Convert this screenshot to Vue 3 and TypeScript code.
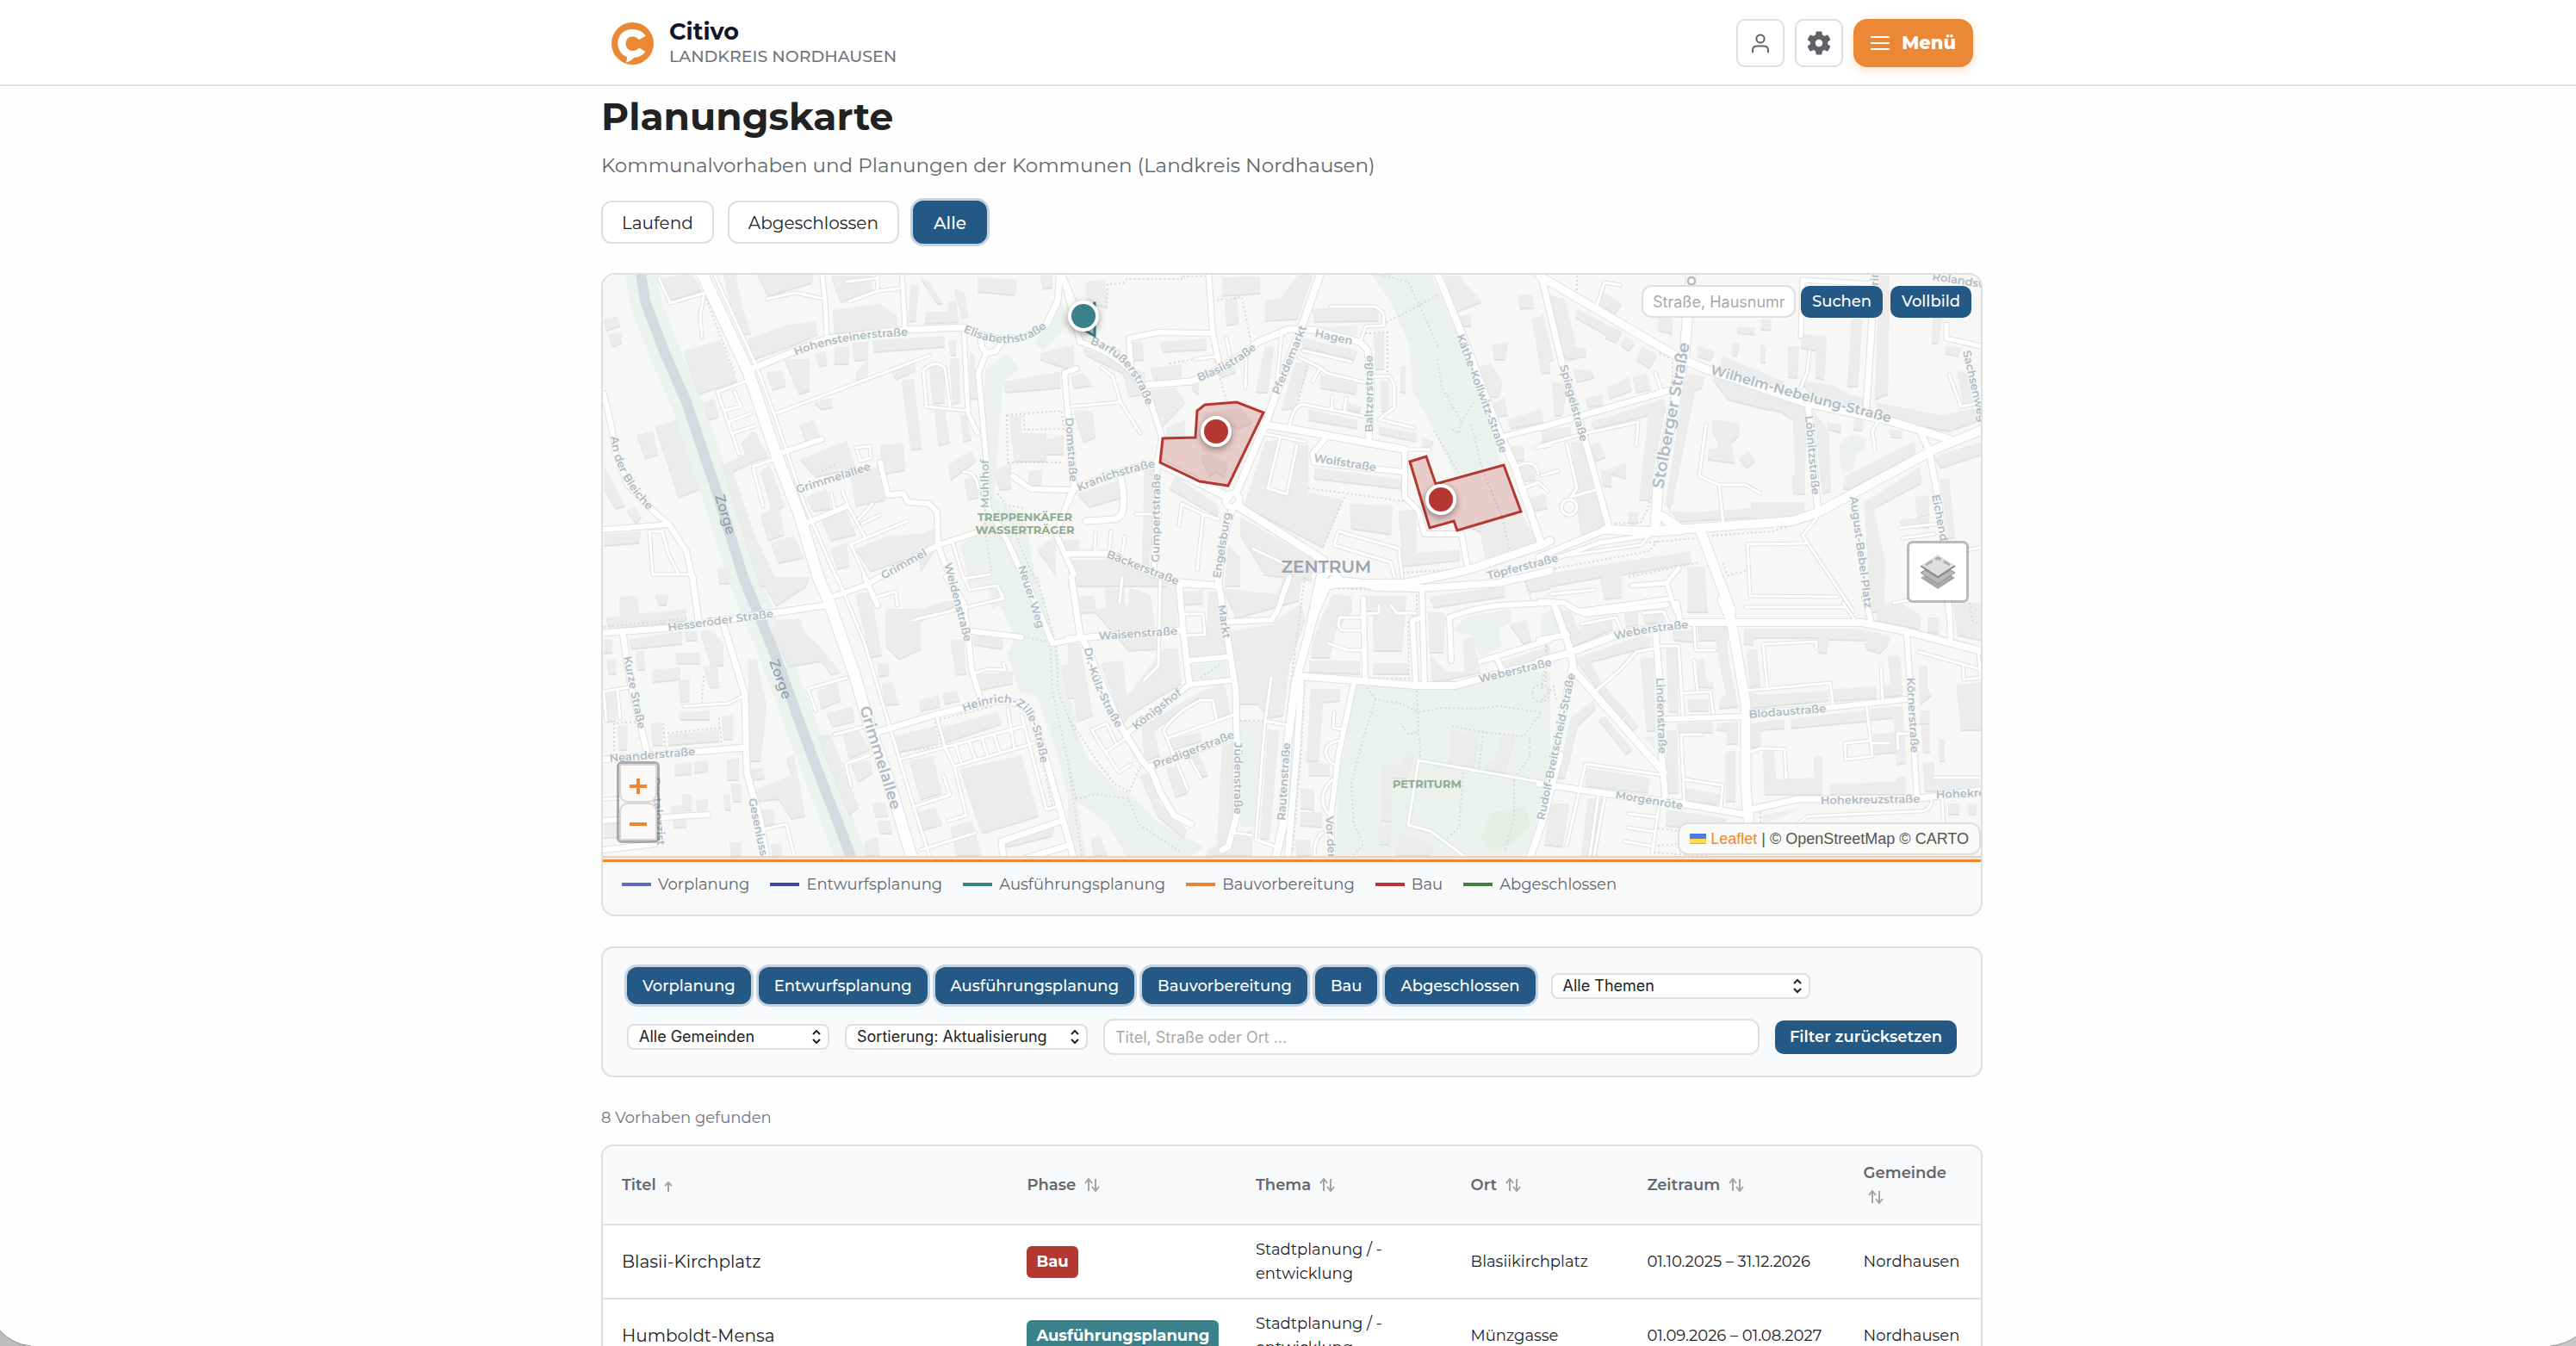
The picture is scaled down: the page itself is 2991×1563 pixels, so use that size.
<script setup lang="ts">
import { ref } from 'vue'

interface Sheet {
  x: number
  y: number
  kx: number
  ky: number
  green: string[]
  buildings: string[]
  roads: [number, string][]
  lanes: string
  paths: string
  labels: [string, string, number?][]
}

const title = 'Planungskarte'
const scopes = ['Laufend', 'Abgeschlossen', 'Alle']
const scope = ref('Alle')

const phases = [
  { name: 'Vorplanung', color: '#5f6bbd' },
  { name: 'Entwurfsplanung', color: '#3d48a6' },
  { name: 'Ausführungsplanung', color: '#3a818b' },
  { name: 'Bauvorbereitung', color: '#e58434' },
  { name: 'Bau', color: '#b53731' },
  { name: 'Abgeschlossen', color: '#43803d' },
]

const columns = [
  { name: 'Titel', width: '29.4%' },
  { name: 'Phase', width: '16.6%' },
  { name: 'Thema', width: '15.6%' },
  { name: 'Ort', width: '12.8%' },
  { name: 'Zeitraum', width: '15.7%' },
  { name: 'Gemeinde', width: '9.9%' },
]

const projects = [
  { title: 'Blasii-Kirchplatz', phase: 'Bau', topic: 'Stadtplanung / -entwicklung', place: 'Blasiikirchplatz', period: '01.10.2025 – 31.12.2026', town: 'Nordhausen' },
  { title: 'Humboldt-Mensa', phase: 'Ausführungsplanung', topic: 'Stadtplanung / -entwicklung', place: 'Münzgasse', period: '01.09.2026 – 01.08.2027', town: 'Nordhausen' },
]

const phaseColor = (name: string) => phases.find((p) => p.name === name)?.color

/* The base map is kept as six sheets; each has its own origin and units. */
const sheets: Sheet[] = [
  {
    x: 690, y: 300, kx: 2.8, ky: 3,
    green: [
      'M1520,150 L1480,240 L1430,290 L1460,320 L1540,230Z',
      'M1270,390 L1340,330 L1380,385 L1330,430 L1320,560 L1300,830 L1400,900 L1440,1140 L1220,1140 L1190,1000 L1260,950 L1280,800 L1262,560Z',
    ],
    buildings: [
      '210,70 320,55 350,110 245,145', '530,55 710,55 705,85 565,130', '290,325 410,285 465,425 340,470', '355,500 390,490 405,550 370,560',
      '200,585 270,562 345,800 275,830', '140,615 190,600 208,680 165,695', '30,210 75,200 85,235 40,250', '48,265 90,258 90,295 60,305',
      '415,720 540,660 550,690 450,740 520,960 600,1140 540,1140', '480,640 520,600 565,690 500,710', '540,740 570,720 620,860 580,880',
      '540,890 600,860 620,960 565,980', '575,990 650,965 680,1040 600,1060', '420,55 460,55 485,180 450,190', '455,190 485,180 510,260 480,265',
      '500,280 630,230 720,220 725,265 650,300 515,350', '770,60 900,60 905,110 800,150', '775,180 930,160 985,200 985,240 780,260',
      '905,285 1140,270 1140,305 910,325', '780,310 828,310 828,365 780,365', '840,295 890,290 890,350 845,355', '720,330 750,325 760,370 730,375',
      '620,350 700,350 700,460 665,470', '560,395 610,390 625,440 580,455', '850,395 890,350 890,415 850,420', '965,390 1045,360 1045,390 980,420',
      '1000,425 1040,420 1065,660 1030,665', '1090,370 1140,375 1140,500 1100,505', '1155,350 1185,345 1190,500 1165,505', '1220,330 1235,330 1245,485 1222,490',
      '1105,525 1140,530 1155,640 1120,650', '1190,545 1210,545 1225,630 1200,635', '1245,65 1375,75 1365,125 1245,115', '1030,90 1055,95 1045,215 1020,220',
      '1060,65 1090,80 1135,155 1115,155', '1150,150 1175,150 1185,220 1075,225 1075,185 1150,185', '1170,105 1205,120 1215,200 1195,205', '1150,285 1175,285 1175,335 1160,335',
      '1330,430 1515,395 1515,450 1335,465', '1450,330 1560,300 1560,390 1450,350', '1350,550 1390,545 1390,610 1470,610 1470,705 1365,705', '1470,630 1525,615 1525,680 1470,680',
      '1295,740 1355,712 1355,800 1320,805', '1410,740 1455,735 1455,790 1415,790', '1150,720 1225,670 1240,705 1160,770', '1205,770 1245,755 1250,830 1215,840',
      '670,580 715,562 735,630 690,640', '670,700 820,635 850,730 720,760', '835,760 920,725 945,840 850,860', '930,650 1005,642 1012,735 940,750',
      '690,830 755,805 770,870 715,880', '740,910 820,880 850,960 770,980', '850,1010 960,965 1060,960 1110,940 1110,1010 900,1090', '770,1010 820,990 830,1070 790,1080',
      '715,500 770,485 775,515 740,525', '105,880 130,865 155,900 135,920', '30,720 100,860 70,870 30,800', '30,960 150,950 145,990 30,1000',
      '400,1080 440,1075 440,1130 405,1130', '1050,1000 1110,1010 1060,1090', '1440,1010 1500,970 1500,1100', '1520,980 1568,980 1568,1020 1520,1010', '1450,60 1490,55 1490,100 1460,105',
    ],
    roads: [
      [13, 'M345,40 L500,395 L590,680 L670,900 L728,1110'],
      [7, 'M500,390 L650,325 L760,280 L1010,250 L1200,240 Q1350,330 1470,230 L1505,150 L1515,40 M1520,60 L1568,180'],
      [5, 'M1000,40 L1010,245 M740,40 L750,150 L755,275 M1200,240 L1215,540 L1245,610'],
      [6, 'M1255,270 L1260,310 L1275,330 L1250,400 L1262,560 L1275,700 L1280,870 L1340,980 L1400,1120 M1275,330 L1305,325 L1325,290'],
      [6, 'M30,470 L60,600 L70,680 L110,790 L190,880 L240,925 L300,1020 L320,1120 M28,945 L240,928'],
      [6, 'M590,685 L740,630 M685,925 L820,865 M880,1140 L1118,1000 L1245,955 M930,710 L955,825 L1005,820 L1020,850 L1090,855 L1115,885 L1118,1000 L1145,1080'],
      [6, 'M1530,400 L1540,540 L1560,790 L1500,960 L1560,1100 M1360,760 L1420,805 L1560,808 M1530,400 L1568,385'],
    ],
    lanes: 'M590,540 L1090,340 M390,55 L530,380 L590,560 L680,850 L790,1120 M355,130 L345,200 L350,275 M490,430 L400,465 L470,680 M435,570 L510,540 M450,610 L520,585 M455,465 L475,515 L420,530 M210,70 L245,155 L360,120 M560,140 L655,120 L745,140 M820,80 L920,70 M830,150 L920,115 L990,105 M920,60 L920,115 M1080,515 L1070,390 Q1105,350 1140,380 L1155,515 M1075,515 L1215,530 M550,865 L515,725 L585,700 M770,820 L780,870 M805,810 L830,870 L880,970 M860,910 L905,855 M870,925 L930,895 M1020,915 L835,995 L890,1130 M850,660 L895,655 L900,695 L865,705 L850,660 M305,1100 L190,1100 L180,950 L220,950 L240,1030 L275,1100 M1165,990 L1200,1115 L1285,1100 M1200,745 Q1240,740 1250,800',
    paths: 'M1340,545 L1520,530 L1525,595 L1400,597 L1395,545 M1340,545 L1345,710 L1525,710 M1310,820 L1340,860 L1400,870 M1265,620 L1270,950 L1290,1090 M1370,960 L1440,1140 M365,140 L455,400 M740,740 L790,715',
    labels: [
      ['Hohensteinerstraße', 'M655,338 Q800,275 1020,270'], ['Elisabethstraße', 'M1198,255 Q1370,345 1482,232'], ['An der Bleiche', 'M52,620 Q65,760 175,880'],
      ['Grimmelallee', 'M660,818 L905,735'], ['Mühlhof', 'M1282,870 L1282,700'], ['Domstraße', 'M1532,555 L1545,780'], ['Grimmel', 'M940,1120 L1080,1035'],
    ],
  },
  {
    x: 1240, y: 300, kx: 2.8, ky: 3,
    green: [
      'M985,55 L1180,55 L1230,170 L1300,350 L1385,560 L1400,700 L1420,720 L1260,760 L1190,600 L1120,460 L1110,300 L1050,150Z',
      'M800,240 L940,235 L940,270 L830,260Z',
    ],
    buildings: [
      '60,80 120,75 130,170 60,150', '500,65 625,62 625,120 500,130', '510,150 550,130 555,225 515,230', '640,145 690,140 750,55 795,55 745,210 640,215',
      '795,175 1012,175 1010,215 800,220', '50,310 250,400 260,470 200,480 180,400 60,335', '210,290 240,290 245,350 215,355', '300,290 450,280 450,315 310,325',
      '270,380 370,370 370,420 280,425', '260,460 350,450 380,500 300,590 270,520', '320,590 380,560 380,620 320,620', '760,275 940,320 930,350 765,310',
      '995,260 1028,260 1028,385 1000,385', '1080,375 1097,375 1097,465 1080,465', '1015,425 1045,430 1045,530 1018,530', '640,305 670,310 650,465 610,465',
      '740,360 785,370 735,520 695,525', '820,405 940,435 935,470 820,450', '780,525 940,565 940,590 780,560', '910,505 955,515 950,535 910,525',
      '1010,585 1135,610 1130,635 1010,610', '1150,625 1190,635 1175,660 1150,655', '480,385 545,375 545,395 500,410', '400,430 425,425 425,470 405,460',
      '440,540 560,520 600,570 560,590 520,580 480,610 440,600', '640,640 690,630 655,800 715,820 750,650 780,650 780,815 890,840 830,1005 570,860',
      '800,730 1090,770 1085,800 800,765', '915,855 1055,860 1050,960 920,940', '1075,880 1130,875 1135,1025 1275,1015 1275,1050 1090,1070', '1225,60 1270,60 1345,150 1260,185',
      '1465,130 1510,125 1515,170 1470,175', '1510,210 1545,200 1568,395 1540,400', '1380,300 1430,290 1420,350 1385,350', '1270,200 1310,195 1310,235 1285,235',
      '1330,380 1375,365 1410,430 1400,480 1360,480', '1380,505 1420,485 1430,545 1390,550', '1430,560 1540,525 1545,570 1440,590', '1440,655 1480,650 1485,700 1450,705',
      '1465,730 1520,720 1520,770 1480,775', '1490,840 1550,820 1560,870 1500,880', '1290,930 1340,950 1360,1060 1540,1010 1470,880', '30,820 170,770 180,830 70,865',
      '250,720 300,710 260,1080 240,1060', '350,760 490,860 490,900 330,800', '430,690 450,680 520,710 510,760 480,740 460,760', '20,530 80,530 90,620 50,640',
      '10,410 50,400 80,440 20,450', '560,900 800,1050 790,1120 640,1100 560,960', '150,1050 320,1100 320,1140 0,1140 0,1050', '520,1000 560,1040 560,1140 510,1140', '0,980 35,980 35,1015 0,1015',
    ],
    roads: [
      [6, 'M-18,60 L40,290 M40,290 Q180,340 230,430 L270,500 L305,620 L290,710 L280,1080'],
      [7, 'M260,440 L400,430 Q520,380 620,290 L720,245 L800,250 L950,290 L975,320 L985,440 L978,645'],
      [8, 'M825,40 L760,240 L680,460 L640,580 L545,820 M635,580 L760,600 L1095,665'],
      [6, 'M1095,665 L1095,830 L1140,880 L1160,960 L1280,960 L1300,1080 M835,630 L795,680 L800,710 L1090,745'],
      [8, 'M1195,40 L1290,290 L1400,600 L1450,720 L1540,1000'],
      [9, 'M860,1135 L1100,1130 L1300,1085 L1540,1000 L1568,985 M300,715 L520,830 M550,860 L830,1050'],
      [7, 'M513,843 a8,8 0 1 0 16,0 a8,8 0 1 0 -16,0 M535,870 L500,1000 L490,1140'],
      [7, 'M0,850 L20,800 L180,740 L300,710 M170,760 Q200,900 150,908 L60,915 M0,1028 L120,1030 L340,1125 L480,1140'],
      [6, 'M1415,620 L1568,580 M455,40 L470,260 L490,360 M205,380 L200,280 L290,258 L465,262'],
    ],
    lanes: 'M10,517 L165,500 M110,380 L145,410 L170,500 L235,610 M515,280 L525,340 M415,350 L480,343 M580,335 L577,450 M855,168 L1000,168 L1025,190 L1028,235 L970,238 L950,290 M695,265 L680,420 M765,320 L920,360 M720,585 Q735,500 770,510 L985,555 M795,430 L820,380 L750,345 M820,380 L840,400 L975,435 M995,412 L1045,412 L1062,440 L1060,520 L1010,560 L1125,590 M690,630 L650,800 L712,822 L745,650 M770,640 L630,610 M860,480 L857,525 M905,487 L900,530 M1100,665 L1175,665 M360,930 L370,855 L440,890 L490,910 M440,890 L420,1085 M220,890 L300,890 M90,955 L88,1020 M140,950 L135,1020 M185,970 L175,1030 M1060,1110 L1050,1060 L865,1000 L880,950 L1075,1010 L1085,1110 M600,1010 L720,1070 M1450,730 Q1520,690 1530,750 M1480,800 L1530,780 L1560,810 M1520,660 L1568,650',
    paths: 'M125,170 L130,90 L180,88 L190,72 L370,72 L370,62 L455,62 M455,150 L565,135 L595,300 M480,360 L515,495 M1000,55 L1105,80 L1205,310 M1200,130 L1075,200 L1030,225 M1200,350 L1215,450 L1280,570 L1270,610 L1240,590 M1320,500 L1280,570 M1310,580 L1350,740 L1410,900 L1440,1030 M1190,600 L1270,750 M965,260 L1040,258 L1040,400 M780,800 L1095,845 M900,830 L830,1005 M330,365 L415,350 M1090,1095 L1330,1080 M780,360 L745,520',
    labels: [
      ['Barfüßerstraße', 'M70,298 Q200,345 245,490'], ['Blasiistraße', 'M425,428 Q530,390 610,318'], ['Hagen', 'M802,272 L918,300'], ['Pferdemarkt', 'M685,478 L775,240'],
      ['Baltzerstraße', 'M990,605 L990,340'], ['Käthe-Kollwitz-Straße', 'M1262,270 L1407,690'], ['Wolfstraße', 'M797,708 L995,742'], ['Kranichstraße', 'M35,812 Q150,755 278,728'],
      ['Gumpertstraße', 'M297,1060 L300,750'], ['Engelsburg', 'M495,1115 L530,890'], ['Bäckerstraße', 'M122,1042 L345,1135'], ['Töpferstraße', 'M1365,1118 L1592,1055'],
    ],
  },
  {
    x: 1790, y: 300, kx: 2.958, ky: 3,
    green: ['M1020,650 L1060,615 L1115,625 L1110,670 L1080,680 L1070,735 L1030,750Z'],
    buildings: [
      '30,130 80,140 120,310 75,320 30,170', '120,175 240,240 230,270 115,205', '230,235 275,255 255,290 220,275', '200,110 275,160 255,190 195,165',
      '290,272 320,295 300,320 272,300', '345,305 395,335 370,380 325,350', '60,320 150,310 155,340 90,350', '110,385 175,390 180,415 120,430',
      '35,430 90,440 70,545 45,545', '150,485 210,475 210,510 160,515', '225,450 300,415 310,460 235,485', '315,415 360,400 375,455 325,465',
      '170,570 420,490 425,530 180,590', '370,520 425,510 390,700 370,840 335,840', '100,640 140,640 220,920 140,980 130,930', '0,600 100,585 100,615 0,640',
      '170,650 200,640 220,690 185,705', '205,740 290,710 290,765 240,750 240,795 210,790', '300,885 330,885 330,920 300,920', '500,400 560,410 550,450 490,470',
      '490,430 530,440 480,700 440,880 520,885 720,870 730,900 470,915 425,850', '720,850 900,850 905,905 720,910', '535,305 595,325 580,355 535,340',
      '585,560 680,575 675,620 650,640 665,710 570,700 575,665 610,660 600,625 585,600', '710,668 733,705 705,730 677,695',
      '590,420 610,390 620,340 830,430 820,470 910,490 905,745 895,820 875,820 865,560 820,530 750,520 640,490', '400,200 450,205 450,260 400,250', '670,240 730,240 730,265 670,258',
      '755,210 790,215 790,250 755,245', '845,305 885,305 880,415 845,410', '890,265 980,270 970,420 940,415 945,320 890,310', '1065,210 1100,210 1085,445 1050,445',
      '1160,60 1195,60 1190,470 1145,490', '890,425 1000,440 1050,470 1110,490 1100,600 1070,595 1080,530 950,510', '1150,500 1370,545 1510,520 1510,560 1400,600 1180,560',
      '935,530 985,600 995,810 965,815', '980,570 1030,580 1030,605 985,595', '1195,595 1240,600 1235,625 1200,620', '1040,760 1280,635 1285,680 1060,800 1035,800',
      '1350,690 1510,640 1512,680 1370,730', '1110,850 1300,725 1305,780 1140,870 1180,1060 1175,1230 1130,1230', '1370,770 1400,765 1420,970 1400,975', '1285,830 1330,825 1330,890 1290,900',
      '1230,910 1330,900 1330,935 1235,930', '1345,150 1385,160 1360,295 1340,295', '1385,305 1440,310 1430,340 1385,330', '1430,390 1460,400 1490,510 1450,515',
      '0,1100 510,1020 515,1060 275,1100 275,1180 215,1185 200,1110 0,1145', '500,1075 560,1075 570,1230 500,1230', '0,180 40,350 0,370', '860,755 905,755 905,820 865,815', '655,290 680,295 670,335 655,335', '752,300 770,305 768,360 752,360',
    ],
    roads: [
      [9, 'M-10,60 L470,345 L560,385 L900,500 L1190,565 L1400,630'],
      [11, 'M515,40 L490,330 L400,800 L390,930 M415,900 L470,940 M385,950 L480,945'],
      [10, 'M220,945 L370,950 L540,940 L860,915 L950,885 L1350,665 L1520,595'],
      [11, 'M545,945 L650,1230'],
      [7, 'M-40,-60 L5,90 L70,370 L150,640 L235,945 M-10,1040 L220,945 M-10,590 L440,460 M915,500 L950,880 M1145,40 L1130,300 L1115,520 M1300,600 L1330,670 L1360,830 L1380,1000 L1400,1230'],
      [5, 'M890,270 L895,75 L1150,90 M1390,230 L1390,280 L1510,305 M-5,1065 L200,990 L360,965 M310,1140 L430,1130 L470,1080 M-5,1195 L80,1200 L120,1230 L440,1185 M430,1130 L460,1230'],
    ],
    lanes: 'M-10,655 L150,610 L330,570 L325,650 M920,325 L910,400 L890,450 M1400,405 L1440,515 L1520,500 M1145,670 L1135,600 L1160,560 M565,580 L540,760 L610,790 L625,930 M610,790 L700,790 L750,820 M945,905 L895,965 L1070,1230 M905,993 L708,995 L715,1175 L1015,1178 M705,1215 L1040,1215 M90,1035 L340,1000 L370,965 M270,92 L215,85 L190,165 M390,400 L410,460 M85,645 L120,800 L100,830 L195,805 M55,740 L0,755 M1230,940 L1370,925 M1240,975 L1350,960 M30,1170 L180,1155 M1390,1030 L1520,1005 M1210,1200 L1260,1190 M69,866 a9,9 0 1 0 18,0 a9,9 0 1 0 -18,0',
    paths: 'M120,60 L120,125 M405,330 L450,350 L450,440 L420,700 L360,880 L340,920 L240,925 M585,965 L790,950 L940,905 L1080,820 M370,990 L530,975 M700,1090 L640,1105 L620,1060 M300,1110 L540,1060 M0,1090 L370,1020 L400,980 M1300,610 L1310,660',
    labels: [
      ['Spiegelstraße', 'M62,375 L132,640'], ['Stolberger Straße', 'M416,805 L505,310', 19], ['Wilhelm-Nebelung-Straße', 'M577,402 L900,495 L1190,570', 16],
      ['Löbnitzstraße', 'M905,550 L930,825'], ['August-Bebel-Platz', 'M1060,830 L1110,1215'], ['Eichend', 'M1340,825 L1370,985'], ['Sachsenweg', 'M1447,325 L1500,560'],
      ['Rolandsw', 'M1340,75 L1510,103'], ['ol', 'M527,98 L532,60', 19], ['rin', 'M1158,95 L1158,55'],
    ],
  },
  {
    x: 690, y: 670, kx: 2.8, ky: 3,
    green: ['M1290,110 L1270,0 L1440,0 L1568,500 L1568,880 L1500,600 L1440,420 L1380,400 L1345,270 L1370,210 L1320,100Z'],
    buildings: [
      '80,70 140,65 145,130 85,140', '40,140 300,110 300,150 50,180', '200,60 240,60 235,95 210,95', '115,215 285,190 285,230 120,250', '295,190 335,190 335,220 300,220',
      '345,190 380,185 420,230 420,305 380,310', '135,260 160,255 165,320 140,320', '265,265 345,265 345,300 270,300', '187,325 280,315 280,355 190,365', '275,360 310,355 312,430 280,435',
      '355,310 400,310 405,380 375,385', '30,215 60,220 60,260 30,265', '42,285 70,285 70,335 45,335', '275,470 375,465 375,495 280,495', '185,510 220,505 220,585 190,585',
      '240,550 405,530 405,570 240,585', '415,485 450,480 450,565 420,565', '75,520 110,515 105,600 80,600', '30,400 75,400 70,500 40,500', '430,635 470,630 470,705 432,705',
      '260,650 315,645 315,685 260,690', '325,645 370,640 370,675 325,680', '500,290 525,285 560,440 540,640 505,640', '510,670 550,665 555,700 515,705',
      '520,740 640,690 625,630 650,620 685,830 640,840 600,770 530,780', '600,150 670,145 680,190 730,240 800,330 770,340 740,290 635,310 575,190', '285,755 315,755 315,810 290,810',
      '330,780 370,775 370,820 335,820', '420,760 440,760 445,810 425,810', '445,720 480,720 480,780 450,780', '250,800 300,790 300,870 260,870', '30,860 75,855 75,905 30,905',
      '725,400 790,365 800,430 740,455', '755,475 840,450 845,500 775,520', '725,550 770,550 860,800 830,825', '810,550 860,530 895,600 830,630', '835,650 900,640 905,680 860,710',
      '540,0 700,0 690,30 590,100', '850,60 900,50 935,270 900,280', '945,110 1060,110 1150,80 1190,90 1060,150 1060,250 990,285 950,240', '920,300 955,300 960,340 925,345',
      '935,370 970,365 990,440 945,445', '1055,430 1120,410 1125,450 1060,465', '1135,405 1180,395 1190,430 1140,440', '1160,220 1200,215 1210,335 1175,340', '1230,200 1330,215 1325,250 1235,235',
      '1250,340 1360,330 1360,370 1260,390', '975,555 1110,520 1120,580 985,610', '1130,525 1310,470 1325,510 1140,575', '1025,640 1100,625 1130,750 1060,775', '1050,820 1110,800 1130,860 1070,880',
      '1190,670 1390,620 1445,830 1260,890', '1335,910 1495,870 1490,900 1340,940', '905,790 945,785 955,830 915,835', '920,850 960,850 970,890 930,890', '880,920 920,905 930,970 880,970',
      '440,925 480,925 480,970 445,970', '545,810 585,810 585,860 555,865', '575,930 610,930 610,970 580,970', '1160,870 1230,850 1260,970 1180,970', '1520,310 1560,300 1568,400 1540,410',
    ],
    roads: [
      [13, 'M728,0 L765,90 L845,340 L900,530 L960,720 L1040,1000'],
      [7, 'M28,195 L250,178 L580,125 L750,100 M92,195 L120,380 L170,610 M28,635 L490,595 M320,0 L340,150 M420,165 L490,410 L495,680 L540,850 L560,980'],
      [6, 'M28,850 L370,828 M28,950 L200,930 M760,75 L880,30 M880,0 L920,100 M1390,210 L1225,190 M1145,0 L1200,90 L1215,200 L1225,320 L1255,420 M1400,0 L1490,230 L1568,215'],
      [7, 'M920,540 L1110,480 L1200,455 Q1380,400 1420,480 L1460,600 L1560,980 M1330,980 L1325,920 L1520,850 M1400,980 L1540,935'],
    ],
    lanes: 'M290,450 L435,440 L485,415 M38,500 L30,400 L115,385 M75,400 L85,495 M820,350 L695,390 L720,465 M780,550 L900,515 M835,730 L818,650 L895,620 M550,880 L625,860 L650,970 M1035,150 L1330,75 L1310,30 L1220,45 L1200,0 M1035,800 L1155,760 L1135,690 M790,0 L880,230 L1040,800 L1090,970 M990,635 L1400,520 M1115,490 L1140,590 L1170,660 L1210,830 L1150,850 M1170,660 L1430,580 M1175,590 L1195,655 M1220,580 L1240,640 M1260,560 L1280,625 M1300,550 L1320,615 M1345,460 L1365,600 M1390,480 L1470,810 L1500,800 M1060,950 L1240,890 M1330,300 L1335,325 L1280,320 L1235,335 M920,70 L980,50 L985,100 M30,775 L80,770',
    paths: 'M30,175 L310,145 M225,510 L230,600 M225,545 L405,525 L405,490 M410,525 L415,590 M355,345 L350,440 M65,620 L65,510 L150,505 M1395,210 L1480,225 L1490,400 L1568,780 M1500,240 L1510,400 L1568,560 M1440,0 L1500,230 M985,610 L1130,590 L1105,500 L1300,450 M1450,600 L1490,800',
    labels: [
      ['Weidenstraße', 'M1137,-45 L1202,215'], ['Neuer Weg', 'M1378,-35 L1440,175'], ['Hesseröder Straße', 'M240,188 L580,140'], ['Kurze Straße', 'M95,280 L143,530'],
      ['Neanderstraße', 'M50,645 L328,620'], ['Grimmelallee', 'M862,455 L968,825', 18], ['Heinrich-Zille-Straße', 'M1200,472 Q1350,405 1400,470 Q1430,520 1448,625'], ['Geseniuss', 'M502,775 L540,975'],
      ['Pestalozzist', 'M188,700 L208,970'],
    ],
  },
  {
    x: 1240, y: 670, kx: 2.8, ky: 3,
    green: [
      'M935,375 L1260,385 L1480,330 L1568,330 L1568,620 L1500,970 L870,970 L880,700Z', 'M0,470 L60,620 L160,740 L200,750 L300,860 L440,940 L400,975 L190,975 L130,860 L30,780 L60,975 L0,975Z',
      'M550,500 L640,500 L620,870 L560,870Z', 'M300,20 L355,20 L355,175 L305,175Z', 'M400,310 L515,290 L520,355 L405,370Z', 'M1290,140 L1440,110 L1440,160 L1400,180 L1410,240 L1340,280 L1310,200 L1255,190Z',
    ],
    buildings: [
      '120,40 185,40 185,115 125,125', '20,70 85,65 95,120 30,125', '80,110 200,100 200,40 270,60 290,250 200,255', '375,50 440,45 440,90 375,95', '455,50 490,50 515,270 390,280 390,210 450,200',
      '310,250 355,250 370,370 200,480 180,510 110,300 180,290 190,420', '0,230 40,230 80,480 30,500 20,420 0,420', '240,520 430,400 510,370 525,470 490,490 470,430 420,420 280,530 300,620 250,640',
      '330,565 430,540 435,570 340,600', '320,660 350,660 390,750 350,765', '385,620 420,600 455,690 430,695', '500,590 545,570 550,830 510,935 485,930', '235,690 270,680 300,790 385,880 375,905 290,830',
      '75,910 105,905 130,970 85,970', '525,190 660,165 760,90 770,150 720,300 700,480 655,490 615,440 560,440 540,300', '650,530 685,535 655,910 625,910', '500,40 680,60 700,0 760,0 750,80 550,140',
      '860,60 920,70 925,110 870,180 850,280 790,280 795,220', '960,65 1100,65 1085,255 995,255 990,120 965,110', '785,290 950,290 950,335 785,330', '990,300 1105,300 1105,335 990,335',
      '790,390 885,390 885,430 830,435 815,640 775,640', '780,645 850,650 850,690 780,690', '755,735 800,740 800,810 755,805', '755,820 825,820 825,870 755,865', '740,915 790,915 790,970 745,970',
      '1175,70 1420,30 1420,65 1190,105', '1170,120 1225,125 1220,260 1175,260', '1180,270 1230,330 1290,330 1285,215 1315,210 1340,330 1215,360 1185,360', '1435,165 1490,150 1505,220 1480,230',
      '1400,300 1568,240 1568,270 1420,320', '1025,655 1090,660 1095,610 1125,615 1100,700 1055,700 1050,850 1015,845', '1010,860 1050,865 1045,930 1010,930', '1080,895 1190,930 1180,970 1060,970',
      '1250,535 1335,550 1320,660 1235,650', '1405,560 1450,565 1420,680 1355,670 1360,640 1390,640', '450,950 600,880 600,970 450,970', '1480,0 1568,0 1568,40 1500,50',
    ],
    roads: [
      [7, 'M0,215 L100,208 L370,185 M10,0 L40,200 L60,240 L170,520 L240,640 L275,680 L300,750 L345,830 L400,860 M490,30 L360,25 L375,190 L395,375 M485,-10 L510,150 L545,400 L550,570 L550,830 L520,940 L500,950'],
      [6, 'M395,290 L515,278 M190,545 L395,375 L525,360 M265,660 L545,555 M515,155 L660,150 L680,120 L720,0'],
      [9, 'M845,20 L800,130 L760,290 L740,370 L715,580 L700,860 L675,980 M820,0 L780,200'],
      [7, 'M760,350 L745,600 L715,980'],
      [8, 'M750,345 L930,360 L1130,378 L1260,378 L1340,355 L1568,290 M860,10 L960,20 L1000,35 L1150,40 L1400,20 L1568,-20 M832,5 a8,8 0 1 0 16,0 a8,8 0 1 0 -16,0'],
      [6, 'M930,370 L880,620 L855,840 L860,980 M960,75 L965,350 M1150,40 L1160,375 M1130,375 L1120,150 L1150,145 M1245,290 L1240,140 Q1300,115 1400,100 L1568,90 M1340,295 L1568,220 M1395,285 L1410,320'],
      [8, 'M1500,980 L1540,860 L1600,620'],
    ],
    lanes: 'M300,15 L295,310 L245,360 M175,0 L168,90 M375,130 L440,130 L445,200 L375,205 M390,740 L310,535 Q350,470 430,430 L470,430 L485,500 M325,560 L540,480 M85,530 L125,510 L155,575 M75,530 L165,680 L205,655 M125,605 L190,560 M400,640 L430,700 M660,350 L640,500 L610,915 L675,940 M640,500 L715,515 M865,470 L862,525 L890,530 M885,570 Q830,580 840,620 Q850,650 870,655 M860,705 Q800,770 850,830 M830,890 Q800,910 800,970 M955,140 L885,140 Q870,170 890,185 L955,185 M845,230 L910,255 L955,255 M1050,100 L1070,125 L1130,125 M960,130 L1010,125 L1010,100 M1568,720 L1140,640 L1105,865 L1180,885 L1290,975 M20,970 L0,930 M540,890 L600,900',
    paths: 'M975,385 L1000,425 L1080,440 L1140,470 L1220,455 L1330,460 L1400,450 L1540,470 L1480,555 L1350,540 L1250,520 M1135,395 L1145,640 M1000,425 L960,560 L920,720 L930,860 L960,930 L930,970 M1085,520 L1110,550 L1140,540 M1500,560 L1500,630 L1450,700 L1450,840 L1420,960 M1350,540 L1335,670 M1285,680 L1270,870 L1230,915 M0,490 L100,650 L150,720 L200,750 L235,660 M25,775 L90,755 L195,770 L230,860 L370,960 M0,650 L45,970 M770,0 L710,480 M770,360 L760,600 L730,960 M850,40 L1135,50 L1135,120 L1105,150 L1110,355 L970,350 M1555,240 L1555,370 M560,500 L635,500 M430,350 L500,300 M1480,0 L1510,90 M1509,405 a10,10 0 1 0 20,0 a10,10 0 1 0 -20,0',
    labels: [
      ['Markt', 'M487,98 L503,215'], ['Waisenstraße', 'M100,220 L352,200'], ['Dr.-Külz-Straße', 'M52,248 Q70,370 160,530'], ['Königshof', 'M222,535 L372,408'], ['Predigerstraße', 'M282,668 L540,562'],
      ['Jüdenstraße', 'M540,575 L540,830'], ['Rautenstraße', 'M706,850 L722,580'], ['Vor der', 'M838,835 L845,970'], ['Weberstraße', 'M1338,368 L1620,298'],
    ],
  },
  {
    x: 1790, y: 700, kx: 2.958, ky: 3,
    green: ['M0,40 L50,20 L75,110 L0,130Z', 'M0,330 L30,350 L30,520 L0,620Z', 'M755,740 L905,710 L760,770Z', 'M345,465 L390,465 L390,510Z'],
    buildings: [
      '65,30 100,25 120,90 240,50 245,90 110,150 95,120', '285,35 330,30 330,75 290,80', '350,40 415,35 420,70 355,70', '115,195 340,115 375,120 370,150 170,205 200,270 185,290', '190,300 210,285 295,380 275,400',
      '195,405 220,395 310,510 290,525', '300,385 330,430 315,440 285,405', '100,400 180,340 185,365 125,425 80,610 50,610', '340,195 385,190 390,445 360,445', '430,160 470,155 470,380 435,375',
      '450,95 525,95 525,135 455,130', '535,85 640,85 640,180 675,360 610,365 615,330 635,320 605,180 600,130 540,130', '535,200 555,195 565,270 590,275 590,295 540,290', '500,335 575,335 575,375 505,375',
      '465,420 590,415 590,450 470,450', '600,420 675,415 675,490 635,490 635,445 600,440', '630,520 665,515 665,690 632,690', '430,445 465,440 470,660 430,660',
      '695,90 1080,90 1195,115 1185,150 1160,175 1115,160 1110,130 985,125 980,175 950,170 950,120 730,120 725,145 695,140', '705,165 740,160 750,285 715,290', '705,310 750,320 985,305 985,340 710,365',
      '1005,300 1150,290 1150,330 1005,340', '1190,180 1230,185 1240,320 1175,325 1175,290 1200,285', '715,420 835,405 835,435 755,440 750,500 720,500', '855,405 1110,375 1115,410 855,435',
      '1130,370 1240,360 1250,555 1220,560 1215,520 1145,525 1140,460 1210,450 1210,400 1130,405', '1295,220 1325,220 1325,300 1340,320 1300,355', '1298,375 1333,375 1333,420 1300,420', '1303,430 1335,430 1335,520 1310,520',
      '1310,555 1350,555 1350,610 1505,615 1505,650 1315,655', '760,515 800,515 805,615 935,610 935,535 965,535 965,665 765,665', '990,630 1220,625 1220,605 1250,605 1250,665 990,665', '1425,285 1512,275 1512,440 1440,440',
      '1365,475 1385,475 1385,550 1367,550', '1150,0 1230,0 1305,45 1295,90 1150,60', '1325,50 1365,50 1365,105 1325,100', '1415,0 1512,0 1512,130 1430,110', '150,575 370,610 365,660 175,640 150,640', '495,645 610,665 605,700 495,690',
      '425,720 640,750 560,790 425,775', '30,700 95,700 70,850 10,840', '160,680 215,680 190,880 135,880', '1395,700 1435,700 1435,735 1395,735', '1465,700 1495,700 1495,735 1468,735',
    ],
    roads: [
      [11, 'M622,-10 L650,60 L700,350 L700,640 L710,745 L715,900'],
      [8, 'M-10,205 L95,175 L260,110 L500,70 L650,68 L1100,68 L1250,100 L1520,170 M40,0 L100,170 L110,235 L420,590'],
      [7, 'M390,90 L405,280 L410,520 L425,690 M105,235 L0,760 M-10,630 L250,670 L480,700 L720,740 M720,720 L880,685 L960,685 L1300,680 L1520,650'],
      [6, 'M425,405 L700,395 M710,385 L980,365 L1250,335 M1255,110 L1270,340 L1290,680 M1400,0 L1405,130 M465,0 L475,70 M1110,-20 L1130,60 M-10,130 L90,110 M90,10 L150,40 L430,5'],
    ],
    lanes: 'M135,75 L255,50 L275,95 M350,35 L420,30 L435,70 M400,150 L470,150 L485,390 M525,80 L530,165 L595,165 M525,200 L535,310 M485,315 L580,310 L590,385 M185,305 L270,235 L325,170 L400,155 M775,290 L760,145 L945,135 L945,160 M700,305 L990,280 L1000,350 M1165,225 L1170,340 M550,460 L480,460 L490,710 M490,615 L620,635 L615,710 M720,520 L750,508 L835,510 L840,610 M1115,355 L1130,480 L1040,488 L1045,545 L1135,535 L1130,480 M1135,490 L1195,488 M1260,455 L1222,455 L1225,510 M415,600 L150,560 L85,845 M195,670 L165,880 M215,680 L180,880 M405,690 L380,880 M300,735 L400,748 M295,783 L390,798 M285,830 L385,848 M1350,608 L1512,608 M1340,690 Q1335,730 1290,725 L915,745 L880,770 M1375,680 L1385,860 M1295,170 L1505,230 M1500,170 L1510,260 L1450,268 L1445,215 M700,15 L1040,15 M1035,0 L1080,65',
    paths: 'M0,300 L20,180 L15,130 M400,785 L470,795 M400,845 L470,840 M385,870 L600,885 M750,730 L750,770 M0,340 L40,290 L50,340 M1470,0 L1480,60 L1500,70',
    labels: [
      ['Weberstraße', 'M250,128 Q370,100 495,90'], ['Rudolf-Breitscheid-Straße', 'M8,758 L115,245'], ['Lindenstraße', 'M393,262 L402,525'], ['Körnerstraße', 'M1255,262 L1270,522'],
      ['Blödaustraße', 'M712,403 L975,380'], ['Morgenröte', 'M252,680 L482,720'], ['Hohekreuzstraße', 'M957,702 L1298,695'], ['Hohekre', 'M1355,682 L1512,675'],
    ],
  },
]

/* Absolute pairs are "x,y"; arc parameters are lower-case and stay in map pixels. */
const project = (s: Sheet, d: string) =>
  d.replace(/([MLQ ])(-?\d+),(-?\d+)/g, (all, lead: string, x: string, y: string, at: number) => {
    const before = d.slice(0, at + 1)
    const lastCommand = before.match(/[A-Za-z](?=[^A-Za-z]*$)/)?.[0]
    if (lead === ' ' && lastCommand === 'a') return all
    return `${lead}${Math.round(s.x + +x / s.kx)},${Math.round(s.y + +y / s.ky)}`
  })

const outline = (s: Sheet, pts: string) => project(s, `M${pts.split(' ').join(' L')}Z`)

/* Runs the label's line on a little, so that its last letters always find room. */
const baseline = (s: Sheet, d: string) => {
  const line = project(s, d)
  const nums = (line.match(/-?\d+/g) ?? []).map(Number)
  const [ax, ay, bx, by] = nums.slice(-4)
  const len = Math.hypot(bx - ax, by - ay)
  return `${line} L${Math.round(bx + ((bx - ax) / len) * 40)},${Math.round(by + ((by - ay) / len) * 40)}`
}

const greens = sheets.flatMap((s) => s.green.map((g) => project(s, g))).join(' ')
const buildings = sheets.flatMap((s) => s.buildings.map((b) => outline(s, b))).join(' ')
const roads = sheets.flatMap((s) => s.roads.map(([width, d]) => ({ width, d: project(s, d) })))
const lanes = sheets.map((s) => project(s, s.lanes)).join(' ')
const paths = sheets.map((s) => project(s, s.paths)).join(' ')
const labels = sheets.flatMap((s) => s.labels.map(([text, d, size]) => ({ text, size: size ?? 13, d: baseline(s, d) })))

const river = 'M743,310 L749,350 L772,410 L797,467 L833,573 L863,670 L901,763 L940,870 L990,1000'
const areas = [
  'M1350,509 L1388,508 L1390,477 L1399,470 L1436,467 L1467,479 L1426,564 L1393,559 L1347,537Z',
  'M1637,536 L1656,530 L1667,562 L1746,540 L1766,594 L1692,616 L1688,605 L1660,613Z',
]
const pins = [
  { x: 1258, y: 367, color: '#3a818b' },
  { x: 1412, y: 501, color: '#b53731' },
  { x: 1673, y: 580, color: '#b53731' },
]
</script>

<template>
  <div class="page">
    <header class="topbar">
      <div class="topbar-inner">
        <a class="brand" href="#">
          <svg class="logo" viewBox="0 0 49 49" aria-hidden="true">
            <ellipse cx="24.500" cy="24.500" rx="24.500" ry="24.500" fill="#ea8835" />
            <path fill="#fff" d="M40 15.500 C35 9.500 29.500 8 24 8 C14 8 7.300 15 7.300 24.500 C7.300 31.500 11.500 37.500 18 40.300 C18.300 42.500 17.500 44.500 17 46.500 C21 45.500 24 43 26.500 41 C32 40.500 36.500 38 39.500 34 L32 29.500 C30 32 27.500 33 24.500 33 C19.800 33 16.500 29.300 16.500 24.600 C16.500 20 20 16.500 24.500 16.500 C27.500 16.500 30 17.800 32 20.300 Z" />
          </svg>
          <span class="brand-text">
            <strong>Citivo</strong>
            <span>LANDKREIS NORDHAUSEN</span>
          </span>
        </a>
        <div class="actions">
          <button class="square" type="button" aria-label="Konto">
            <svg width="24" height="24" viewBox="0 0 24 24" fill="none" stroke="#5f6368" stroke-width="2" stroke-linecap="round">
              <circle cx="12" cy="7" r="4.600" />
              <path d="M3 22.500 V20.500 Q3 15.500 8 15.500 H16 Q21 15.500 21 20.500 V22.500" />
            </svg>
          </button>
          <button class="square" type="button" aria-label="Einstellungen">
            <svg width="34" height="34" viewBox="0 0 24 24" fill="#5f6368">
              <path d="M19.140 12.940c.040-.300.060-.610.060-.940 0-.320-.020-.640-.070-.940l2.030-1.580c.180-.140.230-.410.120-.610l-1.920-3.320c-.120-.220-.370-.290-.590-.220l-2.390.960c-.500-.380-1.030-.700-1.620-.940L14.400 2.810c-.040-.240-.240-.410-.480-.410h-3.840c-.240 0-.430.170-.470.410L9.250 5.350c-.590.240-1.130.570-1.620.940L5.240 5.330c-.220-.080-.470 0-.590.220L2.740 8.870c-.120.210-.080.470.120.610l2.030 1.580c-.050.300-.090.630-.090.940s.020.640.070.940l-2.030 1.580c-.180.140-.230.410-.120.610l1.920 3.320c.120.220.370.290.590.220l2.390-.960c.500.380 1.030.700 1.620.940l.360 2.540c.050.240.240.410.480.410h3.840c.240 0 .440-.170.470-.410l.360-2.540c.590-.240 1.130-.560 1.620-.940l2.390.960c.220.080.470 0 .590-.220l1.920-3.320c.120-.220.070-.470-.120-.610l-2.010-1.580zM12 15c-1.660 0-3-1.340-3-3s1.340-3 3-3 3 1.340 3 3-1.340 3-3 3z" />
            </svg>
          </button>
          <button class="menu" type="button">
            <svg width="22" height="16" viewBox="0 0 22 16" stroke="#fff" stroke-width="2"><path d="M0 1H22M0 8H22M0 15H22" /></svg>
            Menü
          </button>
        </div>
      </div>
    </header>

    <main>
      <h1>{{ title }}</h1>
      <p class="lead">Kommunalvorhaben und Planungen der Kommunen (Landkreis Nordhausen)</p>
      <div class="scopes">
        <button v-for="s in scopes" :key="s" type="button" class="scope" :class="{ active: s === scope }" @click="scope = s">{{ s }}</button>
      </div>

      <section class="card map-card">
        <div class="map">
          <svg class="canvas" viewBox="700 319 1600 679" preserveAspectRatio="xMidYMid slice" role="img" aria-label="Karte von Nordhausen">
            <rect x="0" y="0" width="3000" height="1500" fill="#f7f7f5" />
            <path :d="river" fill="none" stroke="#ecf2ee" stroke-width="36" />
            <path :d="greens" fill="#ecf1ed" />
            <path d="M1719,973 L1733,943 L1772,937 L1776,960 L1754,980 L1729,990Z" fill="#e6ede6" />
            <path :d="river" fill="none" stroke="#d4dbdf" stroke-width="12" />
            <path :d="buildings" fill="#e1e1e1" transform="translate(0 2)" />
            <path :d="buildings" fill="#ececec" />
            <path :d="paths" fill="none" stroke="#d8d8d6" stroke-width="2" stroke-dasharray="2 3" />
            <g fill="none" stroke-linecap="round" stroke-linejoin="round">
              <path :d="lanes" stroke="#e1e1e1" stroke-width="5" />
              <path v-for="(r, i) in roads" :key="'c' + i" :d="r.d" stroke="#e0e0e0" :stroke-width="r.width + 2" />
              <path :d="lanes" stroke="#fff" stroke-width="3" />
              <path v-for="(r, i) in roads" :key="'r' + i" :d="r.d" stroke="#fefefe" :stroke-width="r.width" />
            </g>
            <defs>
              <path v-for="(l, i) in labels" :id="'street-' + i" :key="i" :d="l.d" />
              <path id="river-upper" d="M830,576 L850,642" />
              <path id="river-lower" d="M893,768 L916,832" />
            </defs>
            <g class="streets">
              <text v-for="(l, i) in labels" :key="i" :font-size="l.size"><textPath :href="'#street-' + i">{{ l.text }}</textPath></text>
            </g>
            <g class="waters">
              <text font-size="16"><textPath href="#river-upper">Zorge</textPath></text>
              <text font-size="16"><textPath href="#river-lower">Zorge</textPath></text>
            </g>
            <g class="places">
              <text x="1190" y="605">TREPPENKÄFER</text>
              <text x="1190" y="620">WASSERTRÄGER</text>
              <text x="1657" y="915">PETRITURM</text>
            </g>
            <text class="district" x="1540" y="665">ZENTRUM</text>

            <path v-for="a in areas" :key="a" :d="a" fill="#b53731" fill-opacity="0.22" stroke="#b53731" stroke-width="3" />
            <path d="M1269,352 L1271,352 L1271,390 L1258,383" fill="#3a818b" fill-opacity="0.3" stroke="#3a818b" stroke-width="3" />
            <g v-for="p in pins" :key="p.x" class="pin">
              <circle :cx="p.x" :cy="p.y" r="16" :fill="p.color" stroke="#fff" stroke-width="4" />
            </g>
          </svg>

          <form class="map-search" @submit.prevent>
            <input type="text" placeholder="Straße, Hausnummer" aria-label="Straße, Hausnummer" />
            <button type="submit">Suchen</button>
            <button type="button" class="full">Vollbild</button>
          </form>
          <button class="layers" type="button" aria-label="Ebenen">
            <svg width="40" height="40" viewBox="0 0 40 40">
              <path d="M0 27 L20 40 L40 27 L35 24 L20 33 L5 24Z" fill="#a9a9a9" />
              <path d="M0 21 L20 34 L40 21 L35 18 L20 27 L5 18Z" fill="#b9b9b9" stroke="#8e8e8e" stroke-width="1" />
              <path d="M0 13 L20 26 L40 13 L20 0Z" fill="#dedede" />
              <path d="M6 12 L20 4 L34 12" fill="none" stroke="#adadad" stroke-width="3" stroke-dasharray="9 4 7 4 9" />
              <path d="M0 13 L20 26 L40 13" fill="none" stroke="#8a8a8a" stroke-width="2" />
            </svg>
          </button>
          <div class="zoom">
            <button type="button" aria-label="Vergrößern"><svg width="20" height="20" viewBox="0 0 20 20" stroke="#ea8835" stroke-width="4"><path d="M0 10H20M10 1V19" /></svg></button>
            <button type="button" aria-label="Verkleinern"><svg width="20" height="20" viewBox="0 0 20 20" stroke="#ea8835" stroke-width="4"><path d="M0 10H20" /></svg></button>
          </div>
          <div class="credits">
            <svg width="19" height="12" viewBox="0 0 19 12" aria-hidden="true"><path fill="#4c7be1" d="M0 0H19V6H0Z" /><path fill="#ffd84d" d="M0 6H19V11H0Z" /><path fill="#e0bc00" d="M0 11H19V12H0Z" /></svg>
            <a href="#">Leaflet</a><span>| © OpenStreetMap © CARTO</span>
          </div>
        </div>
        <ul class="legend">
          <li v-for="p in phases" :key="p.name"><i :style="{ background: p.color }"></i>{{ p.name }}</li>
        </ul>
      </section>

      <section class="card filters">
        <div class="filter-row">
          <div class="chips">
            <button v-for="p in phases" :key="p.name" type="button" class="chip">{{ p.name }}</button>
          </div>
          <label class="select topics">
            <select aria-label="Thema"><option>Alle Themen</option></select>
            <svg width="12" height="18" viewBox="0 0 12 18"><path d="M2 6 L6 2 L10 6 M2 12 L6 16 L10 12" /></svg>
          </label>
        </div>
        <div class="filter-row">
          <label class="select towns">
            <select aria-label="Gemeinde"><option>Alle Gemeinden</option></select>
            <svg width="12" height="18" viewBox="0 0 12 18"><path d="M2 6 L6 2 L10 6 M2 12 L6 16 L10 12" /></svg>
          </label>
          <label class="select order">
            <select aria-label="Sortierung"><option>Sortierung: Aktualisierung</option></select>
            <svg width="12" height="18" viewBox="0 0 12 18"><path d="M2 6 L6 2 L10 6 M2 12 L6 16 L10 12" /></svg>
          </label>
          <input class="query" type="text" placeholder="Titel, Straße oder Ort ..." aria-label="Titel, Straße oder Ort" />
          <button class="reset" type="button">Filter zurücksetzen</button>
        </div>
      </section>

      <p class="count">8 Vorhaben gefunden</p>

      <div class="card table-card">
        <table>
          <colgroup>
            <col v-for="c in columns" :key="c.name" :style="{ width: c.width }" />
          </colgroup>
          <thead>
            <tr>
              <th v-for="(c, i) in columns" :key="c.name" scope="col">
                <button type="button">
                  {{ c.name }}
                  <svg v-if="i === 0" width="10" height="12" viewBox="0 0 10 12"><path d="M5 12 V2 M1 5 L5 1 L9 5" /></svg>
                  <svg v-else width="20" height="16" viewBox="0 0 20 16"><path d="M6 15 V2 M2 6 L6 1 L10 6 M14 1 V14 M10 10 L14 15 L18 10" /></svg>
                </button>
              </th>
            </tr>
          </thead>
          <tbody>
            <tr v-for="p in projects" :key="p.title">
              <td class="name">{{ p.title }}</td>
              <td><span class="badge" :style="{ background: phaseColor(p.phase) }">{{ p.phase }}</span></td>
              <td>{{ p.topic }}</td>
              <td>{{ p.place }}</td>
              <td class="period">{{ p.period }}</td>
              <td>{{ p.town }}</td>
            </tr>
          </tbody>
        </table>
      </div>
    </main>

    <svg class="corner left" width="36" height="20" viewBox="0 0 36 20" aria-hidden="true"><path d="M0 2 Q14 18 36 20 H0Z" fill="#bdbdbd" /><path d="M0 2 Q14 18 36 20" fill="none" stroke="#8f8f8f" /></svg>
    <svg class="corner right" width="30" height="12" viewBox="0 0 30 12" aria-hidden="true"><path d="M30 1 Q18 10 0 12 H30Z" fill="#c6c6c6" /><path d="M30 1 Q18 10 0 12" fill="none" stroke="#969696" /></svg>
  </div>
</template>

<style>
body {
  margin: 0;
  background: #fefefe;
}
</style>

<style scoped>
* {
  box-sizing: border-box;
}
.page {
  height: 100vh;
  overflow: hidden;
  font-family: Montserrat, Inter, 'Liberation Sans', sans-serif;
  font-size: 18px;
  line-height: 28px;
  color: #222;
}
button,
input,
select {
  font: inherit;
  color: inherit;
  margin: 0;
}
input,
select {
  font-family: Inter, 'Liberation Sans', sans-serif;
}
button {
  cursor: pointer;
}
.topbar {
  height: 100px;
  padding-left: 9px;
  border-bottom: 2px solid #dfdfdf;
  background: #fff;
}
.topbar-inner {
  max-width: 1604px;
  margin: 0 auto;
  height: 98px;
  padding: 2px 11px 0 12px;
  display: flex;
  align-items: center;
  justify-content: space-between;
}
.brand {
  display: flex;
  align-items: center;
  gap: 18px;
  text-decoration: none;
}
.logo {
  width: 49px;
  height: 49px;
}
.brand-text {
  display: flex;
  flex-direction: column;
  font-size: 19px;
  line-height: 26px;
  color: #71767e;
  font-weight: 500;
}
.brand-text strong {
  font-size: 27px;
  line-height: 32px;
  color: #11152b;
}
.actions {
  display: flex;
  gap: 12px;
}
.square {
  width: 56px;
  height: 56px;
  padding: 0;
  display: grid;
  place-items: center;
  border: 2px solid #dfdfdf;
  border-radius: 10px;
  background: #fff;
}
.menu {
  height: 56px;
  padding: 0 20px;
  display: flex;
  align-items: center;
  gap: 14px;
  border: 0;
  border-radius: 16px;
  background: #ea8835;
  color: #fff;
  font-size: 21px;
  font-weight: 800;
  box-shadow: 0 4px 12px rgba(234, 136, 53, 0.25);
}
main {
  max-width: 1613px;
  margin: 0 auto;
  padding: 7px 0 0 9px;
}
h1 {
  margin: 0;
  font-size: 44px;
  line-height: 56px;
  font-weight: 700;
}
.lead {
  margin: 12px 0 24px;
  font-size: 23px;
  line-height: 34px;
  color: #63676c;
}
.scopes {
  display: flex;
  gap: 16px;
}
.scope {
  height: 50px;
  padding: 1px 22px 0;
  border: 2px solid #dfdfdf;
  border-radius: 12px;
  background: #fff;
  font-size: 20px;
}
.scope.active {
  border-color: #255985;
  background: #255985;
  color: #fff;
  font-weight: 500;
  box-shadow: 0 0 0 3px #c6d3e0;
}
.card {
  border: 2px solid #dfdfdf;
  border-radius: 16px;
  background: #f8f9fb;
  overflow: hidden;
}
.map-card {
  margin-top: 34px;
}
.map {
  position: relative;
  height: 679px;
}
.canvas {
  display: block;
  width: 100%;
  height: 100%;
}
.canvas text {
  font-family: Montserrat, Inter, sans-serif;
  font-weight: 500;
}
.canvas .streets text {
  font-weight: 600;
  fill: #afbbc5;
  stroke: #f7f7f5;
  stroke-width: 2px;
  paint-order: stroke;
}
.waters text {
  fill: #8a9ca7;
}
.canvas .places text {
  font-size: 13px;
  font-weight: 700;
  fill: #93aa93;
  text-anchor: middle;
}
.canvas .district {
  font-size: 20px;
  font-weight: 600;
  fill: #98a5b0;
  text-anchor: middle;
}
.pin {
  filter: drop-shadow(0 3px 4px rgba(0, 0, 0, 0.4));
}
.map-search {
  position: absolute;
  top: 12px;
  right: 11px;
  display: flex;
  align-items: center;
  gap: 6px;
  font-weight: 500;
}
.map-search input {
  width: 179px;
  height: 38px;
  padding: 0 11px;
  border: 2px solid #dfdfdf;
  border-radius: 12px;
  background: #fff;
  font-weight: 400;
}
.map-search button {
  height: 37px;
  padding: 0 13px;
  border: 0;
  border-radius: 10px;
  background: #255985;
  color: #fff;
}
.map-search .full {
  margin-left: 3px;
}
::placeholder {
  color: #a9a9a9;
  opacity: 1;
}
.layers {
  position: absolute;
  top: 309px;
  right: 14px;
  width: 72px;
  height: 72px;
  display: grid;
  place-items: center;
  padding: 0;
  border: 3px solid rgba(0, 0, 0, 0.25);
  border-radius: 7px;
  background: #fff;
  background-clip: padding-box;
}
.zoom {
  position: absolute;
  left: 16px;
  top: 565px;
  width: 50px;
  border: 3px solid rgba(0, 0, 0, 0.3);
  border-radius: 6px;
}
.zoom button {
  display: grid;
  place-items: center;
  width: 44px;
  height: 45px;
  padding: 6px 0 0;
  border: 2px solid #d9d6d3;
  background: #faf9f7;
  border-radius: 2px 2px 10px 10px;
}
.zoom button + button {
  border-radius: 10px 10px 2px 2px;
  height: 44px;
}
.credits {
  position: absolute;
  right: 0;
  bottom: 5px;
  height: 38px;
  padding: 0 12px;
  display: flex;
  align-items: center;
  gap: 5px;
  border: 2px solid #dfdfdf;
  border-radius: 12px;
  background: rgba(250, 250, 248, 0.93);
  font-family: 'Liberation Sans', Arial, sans-serif;
  color: #555;
}
.credits a {
  color: #ea8835;
  text-decoration: none;
}
.legend {
  position: relative;
  margin: 0;
  padding: 14px 22px 23px;
  display: flex;
  flex-wrap: wrap;
  gap: 0 24px;
  list-style: none;
  border-top: 3px solid #ea8835;
  box-shadow: 0 -2px #f0e8e1, 0 -4px #e3d3c8;
  line-height: 24px;
  color: #63676c;
}
.legend li {
  display: flex;
  align-items: center;
  gap: 8px;
}
.legend i {
  width: 34px;
  height: 4px;
}
.filters {
  margin-top: 35px;
  padding: 22px 28px 24px;
  border-radius: 14px;
  display: flex;
  flex-direction: column;
  gap: 17px;
}
.filter-row {
  display: flex;
  align-items: center;
  gap: 18px;
}
.chips {
  display: flex;
  gap: 9px;
}
.chip {
  height: 43px;
  padding: 1px 18px 0;
  border: 0;
  border-radius: 12px;
  background: #255985;
  color: #fff;
  font-weight: 500;
  box-shadow: 0 0 0 3px #c6d3e0;
}
.select {
  position: relative;
}
.select select {
  display: block;
  width: 100%;
  height: 30px;
  padding: 0 30px 0 12px;
  appearance: none;
  border: 2px solid #dfdfdf;
  border-radius: 8px;
  background: #fff;
  line-height: 24px;
}
.select svg {
  position: absolute;
  right: 9px;
  top: 6px;
  fill: none;
  stroke: #222;
  stroke-width: 2;
  pointer-events: none;
}
.topics {
  width: 301px;
}
.towns {
  width: 235px;
}
.order {
  width: 282px;
}
.query {
  flex: 1;
  min-width: 0;
  height: 42px;
  padding: 0 12px;
  border: 2px solid #dfdfdf;
  border-radius: 12px;
  background: #fff;
}
.reset {
  height: 39px;
  padding: 0 17px;
  border: 0;
  border-radius: 10px;
  background: #255985;
  color: #fff;
  font-weight: 600;
}
.count {
  margin: 33px 0 17px;
  color: #71767e;
}
.table-card {
  border-radius: 14px;
}
table {
  width: 100%;
  table-layout: fixed;
  border-collapse: separate;
  border-spacing: 0;
  background: #fff;
}
th {
  padding: 17px 22px;
  text-align: left;
  background: #f8f9fb;
  border-bottom: 2px solid #dfdfdf;
}
th button {
  padding: 0;
  border: 0;
  background: none;
  text-align: left;
  font-weight: 600;
  color: #63676c;
}
th svg {
  margin-left: 4px;
  vertical-align: -2px;
  fill: none;
  stroke: #a3a5a8;
  stroke-width: 2;
}
td {
  padding: 14px 22px;
  border-bottom: 2px solid #dfdfdf;
}
td.name {
  font-size: 20px;
}
td.period {
  white-space: nowrap;
}
.badge {
  display: inline-block;
  padding: 5px 11px;
  border-radius: 6px;
  line-height: 27px;
  color: #fff;
  font-weight: 700;
  white-space: nowrap;
}
.corner {
  position: fixed;
  bottom: 0;
}
.left {
  left: 0;
}
.right {
  right: 0;
}
</style>
